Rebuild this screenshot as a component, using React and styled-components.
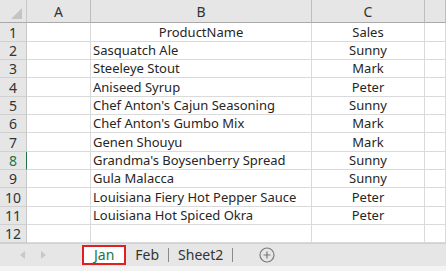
import React from 'react';
import styled, { createGlobalStyle } from 'styled-components';

const Global = createGlobalStyle`
  html, body { margin: 0; padding: 0; background: #fff; }
  body { font-family: "Noto Sans", "Liberation Sans", sans-serif; overflow: hidden; }
`;

const Book = styled.div`
  width: 446px;
  height: 271px;
  display: flex;
  flex-direction: column;
  background: #fff;
  overflow: hidden;
`;

const Sheet = styled.div`
  display: grid;
  grid-template-columns: 27px 64px 221px 113px 1fr;
  grid-template-rows: 23px repeat(4, 19px 18px 18px);
  font-size: 13px;
  color: #262626;
`;

const Corner = styled.div`
  position: relative;
  background: #e6e6e6;
  border-right: 1px solid #c8c8c8;
  border-bottom: 1px solid #a9a9a9;
  &::after {
    content: '';
    position: absolute;
    right: 4px;
    bottom: 3px;
    width: 0;
    height: 0;
    border-left: 11px solid transparent;
    border-bottom: 11px solid #c4c4c4;
  }
`;

const ColHead = styled.div`
  background: #e6e6e6;
  border-right: 1px solid #bdbdbd;
  border-bottom: 1px solid #a9a9a9;
  display: flex;
  align-items: center;
  justify-content: center;
  font-size: 14px;
  color: #333;
`;

const RowHead = styled.div`
  background: #e6e6e6;
  border-right: 1px solid ${p => (p.$active ? '#217346' : '#c8c8c8')};
  border-bottom: 1px solid #d0d0d0;
  display: flex;
  align-items: center;
  justify-content: center;
  font-size: 14px;
  color: ${p => (p.$active ? '#217346' : '#333')};
`;

const Cell = styled.div`
  border-right: 1px solid #dadada;
  border-bottom: 1px solid #dadada;
  display: flex;
  align-items: center;
  justify-content: ${p => (p.$center ? 'center' : 'flex-start')};
  padding-left: ${p => (p.$center ? '0' : '2px')};
  white-space: nowrap;
  overflow: visible;
  line-height: 1;
`;

const TabBar = styled.div`
  height: 22px;
  background: #e6e6e6;
  display: flex;
  align-items: center;
  border-top: 1px solid #d0d0d0;
`;

const Footer = styled.div`
  flex: 1;
  background: #f3f3f3;
`;

const Nav = styled.div`
  width: 82px;
  display: flex;
  align-items: center;
  padding-left: 20px;
  gap: 16px;
  box-sizing: border-box;
`;

const Arrow = styled.span`
  width: 0;
  height: 0;
  border-top: 4px solid transparent;
  border-bottom: 4px solid transparent;
  ${p => (p.$dir === 'left'
    ? 'border-right: 5px solid #c8c8c8;'
    : 'border-left: 5px solid #c8c8c8;')}
`;

const Tab = styled.div`
  height: 20px;
  box-sizing: border-box;
  display: flex;
  align-items: center;
  padding: 0 ${p => (p.$active ? '10px' : '7px')};
  font-size: 14px;
  color: ${p => (p.$active ? '#217346' : '#333')};
  background: ${p => (p.$active ? '#fff' : 'transparent')};
  border: 2px solid ${p => (p.$active ? '#e02020' : 'transparent')};
  margin-top: -1px;
`;

const Sep = styled.span`
  width: 1px;
  height: 14px;
  background: #8a8a8a;
`;

const AddBtn = styled.div`
  margin-left: 26px;
  display: flex;
  align-items: center;
`;

const products = [
  ['ProductName', 'Sales', true],
  ['Sasquatch Ale', 'Sunny'],
  ['Steeleye Stout', 'Mark'],
  ['Aniseed Syrup', 'Peter'],
  ["Chef Anton's Cajun Seasoning", 'Sunny'],
  ["Chef Anton's Gumbo Mix", 'Mark'],
  ['Genen Shouyu', 'Mark'],
  ["Grandma's Boysenberry Spread", 'Sunny'],
  ['Gula Malacca', 'Sunny'],
  ['Louisiana Fiery Hot Pepper Sauce', 'Peter'],
  ['Louisiana Hot Spiced Okra', 'Peter'],
  ['', ''],
];

export default function App() {
  return (
    <Book>
      <Global />
      <Sheet>
        <Corner />
        <ColHead>A</ColHead>
        <ColHead>B</ColHead>
        <ColHead>C</ColHead>
        <ColHead />
        {products.map(([name, sales, head], i) => (
          <React.Fragment key={i}>
            <RowHead $active={i === 7}>{i + 1}</RowHead>
            <Cell />
            <Cell $center={head}>{name}</Cell>
            <Cell $center>{sales}</Cell>
            <Cell />
          </React.Fragment>
        ))}
      </Sheet>
      <TabBar>
        <Nav>
          <Arrow $dir="left" />
          <Arrow $dir="right" />
        </Nav>
        <Tab $active>Jan</Tab>
        <Tab>Feb</Tab>
        <Sep />
        <Tab>Sheet2</Tab>
        <Sep />
        <AddBtn>
          <svg width="16" height="16" viewBox="0 0 16 16">
            <circle cx="8" cy="8" r="7" fill="none" stroke="#7a7a7a" strokeWidth="1.2" />
            <path d="M8 4.5v7M4.5 8h7" stroke="#7a7a7a" strokeWidth="1.2" />
          </svg>
        </AddBtn>
      </TabBar>
      <Footer />
    </Book>
  );
}
